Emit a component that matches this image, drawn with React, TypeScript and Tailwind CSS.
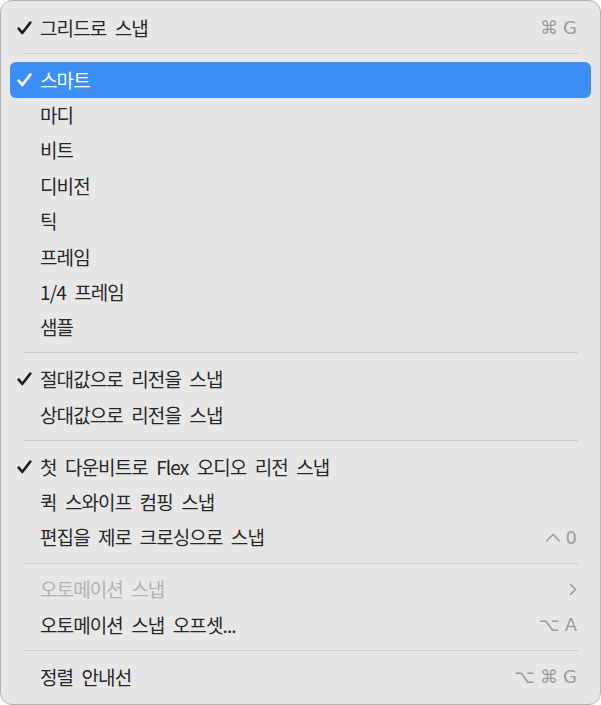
import React from 'react';

type Row = {
  label: string;
  checked?: boolean;
  shortcut?: string[];
  disabled?: boolean;
  submenu?: boolean;
  active?: boolean;
};

type Entry = Row | 'sep';

const entries: Entry[] = [
  { label: '그리드로 스냅', checked: true, shortcut: ['⌘', 'G'] },
  'sep',
  { label: '스마트', checked: true, active: true },
  { label: '마디' },
  { label: '비트' },
  { label: '디비전' },
  { label: '틱' },
  { label: '프레임' },
  { label: '1/4 프레임' },
  { label: '샘플' },
  'sep',
  { label: '절대값으로 리전을 스냅', checked: true },
  { label: '상대값으로 리전을 스냅' },
  'sep',
  { label: '첫 다운비트로 Flex 오디오 리전 스냅', checked: true },
  { label: '퀵 스와이프 컴핑 스냅' },
  { label: '편집을 제로 크로싱으로 스냅', shortcut: ['⌃', '0'] },
  'sep',
  { label: '오토메이션 스냅', disabled: true, submenu: true },
  { label: '오토메이션 스냅 오프셋...', shortcut: ['⌥', 'A'] },
  'sep',
  { label: '정렬 안내선', shortcut: ['⌥', '⌘', 'G'] },
];

const Check = ({ className }: { className?: string }) => (
  <svg width="15" height="14" viewBox="0 0 15 14" className={className}>
    <path
      d="M1.7 7.6 L5.3 12 L13.3 1.6"
      fill="none"
      stroke="currentColor"
      strokeWidth="2.6"
      strokeLinecap="round"
      strokeLinejoin="round"
    />
  </svg>
);

const Chevron = () => (
  <svg width="8" height="13" viewBox="0 0 8 13" className="text-[#9c9c9c]">
    <path d="M1.5 1.5 L6.5 6.5 L1.5 11.5" fill="none" stroke="currentColor" strokeWidth="1.6" strokeLinecap="round" strokeLinejoin="round" />
  </svg>
);

const Control = () => (
  <svg width="16" height="10" viewBox="0 0 16 10">
    <path d="M1.5 8 L8 1.5 L14.5 8" fill="none" stroke="currentColor" strokeWidth="1.5" strokeLinecap="round" strokeLinejoin="round" />
  </svg>
);

const Key = ({ k }: { k: string }) => {
  if (k === '⌃') return <Control />;
  return <span>{k}</span>;
};

const MenuRow = ({ row }: { row: Row }) => {
  const text = row.active ? 'text-white' : row.disabled ? 'text-[#b3b3b3]' : 'text-[#272727]';
  return (
    <div
      className={`flex h-[35.36px] items-center rounded-[6px] pl-[7px] pr-[14px] ${
        row.active ? 'bg-[#3c8ff6]' : ''
      } ${text}`}
    >
      <div className="flex w-[23px] shrink-0 items-center">
        {row.checked && <Check className={row.active ? 'text-white' : 'text-[#1c1c1c]'} />}
      </div>
      <span className="flex-1 whitespace-nowrap text-[19px] leading-normal tracking-[-0.9px] [word-spacing:5px]">
        {row.label}
      </span>
      {row.shortcut && (
        <span className="flex items-center gap-[5px] font-['DejaVu_Sans','Noto_Sans',sans-serif] text-[18px] leading-normal text-[#9c9c9c]">
          {row.shortcut.map((k, i) => (
            <Key key={i} k={k} />
          ))}
        </span>
      )}
      {row.submenu && <Chevron />}
    </div>
  );
};

export default function App() {
  return (
    <div className="h-[705px] w-[601px] overflow-hidden rounded-[12px] border border-[#b3b3b3] bg-[#e7e7e7] px-[9px] py-[9.3px] font-['Noto_Sans_CJK_KR','Noto_Sans',sans-serif] antialiased">
      {entries.map((e, i) =>
        e === 'sep' ? (
          <div key={i} className="h-[16.64px] pt-[7.3px]">
            <div className="ml-[14px] mr-[13px] h-px bg-[#cdcdcd]" />
          </div>
        ) : (
          <MenuRow key={i} row={e} />
        ),
      )}
    </div>
  );
}
